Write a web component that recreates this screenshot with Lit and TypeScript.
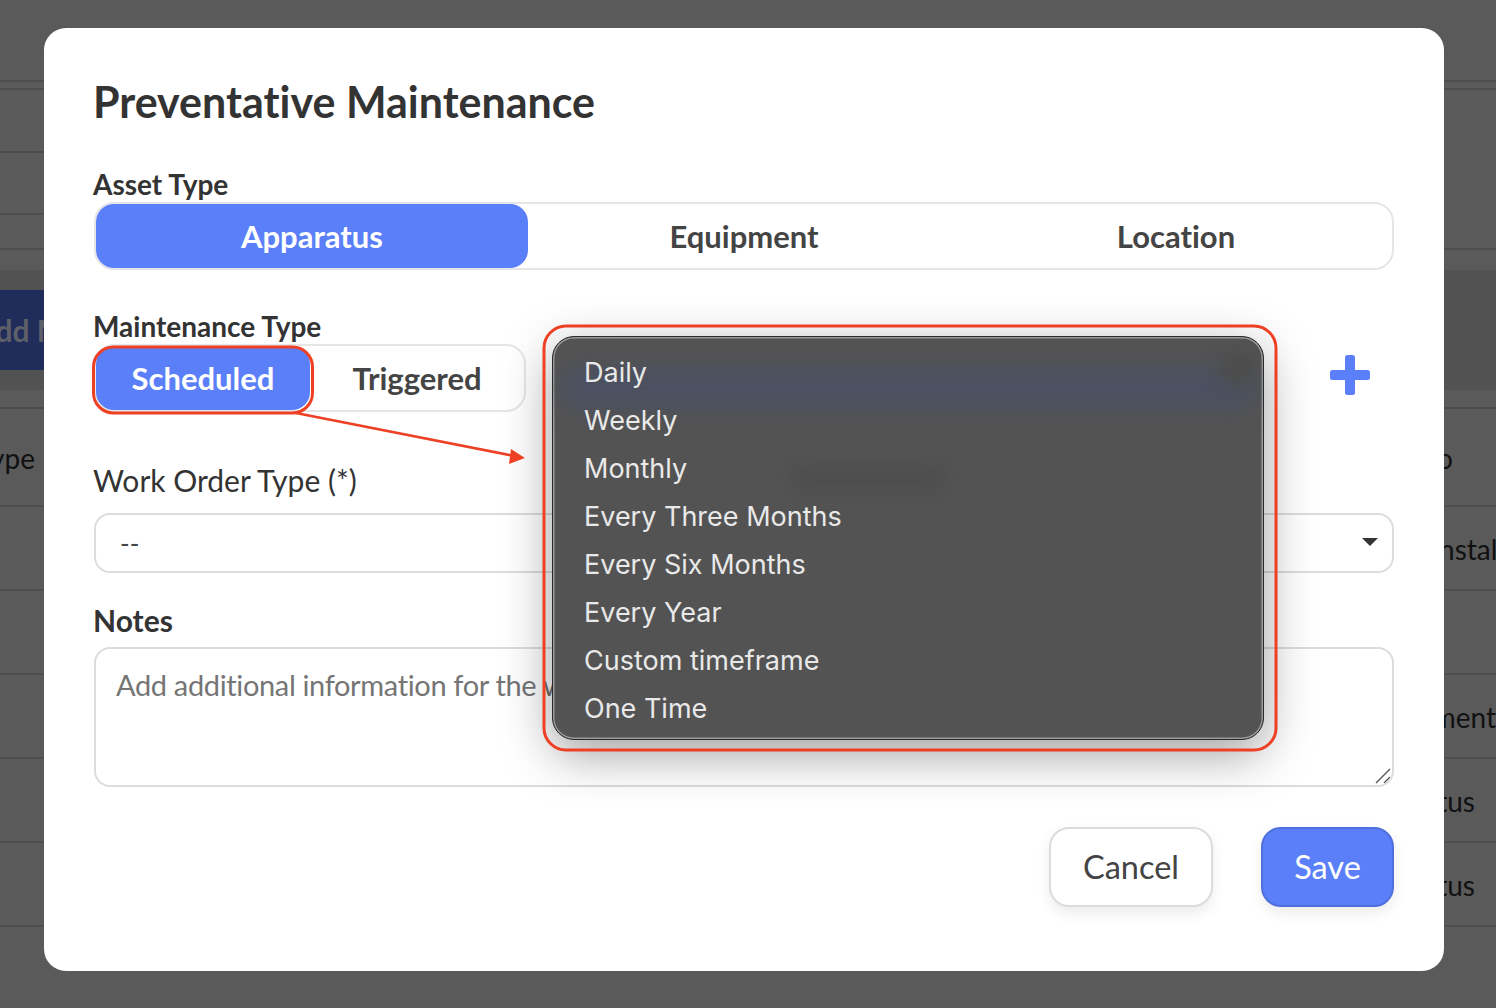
import { LitElement, html, css, svg } from "lit";
import { customElement } from "lit/decorators.js";

const MENU = ["Daily", "Weekly", "Monthly", "Every Three Months", "Every Six Months", "Every Year", "Custom timeframe", "One Time"];
// Page rows dimmed behind the dialog: [height, left text, right text, right offset]
const ROWS: [number, string, string, number][] = [
  [98, "Type", "Info", 43],
  [84, "", "Installation", -70],
  [84, "", "", 0],
  [84, "", "Equipment", 0],
  [84, "", "Status", 21],
  [84, "", "Status", 21],
];

@customElement("app-root")
export class AppRoot extends LitElement {
  static styles = css`
    :host { display: block; width: 1496px; height: 1008px; overflow: hidden; position: relative; font-family: Lato, sans-serif; color: #333; font-variant-ligatures: none; }
    * { box-sizing: border-box; }
    .page { width: 1496px; height: 1008px; background: #5a5a5a; display: flex; flex-direction: column; color: #111; font-size: 28px; overflow: hidden; }
    .ln { border-bottom: 2px solid #4d4d4f; flex: none; }
    .h82 { height: 82px; }
    .h8 { height: 8px; }
    .h162 { height: 160px; display: flex; flex-direction: column; border-bottom-color: #4d4d4f; }
    .partial { width: 44px; border-bottom: 2px solid #4d4d4f; flex: none; }
    .p1 { height: 63px; }
    .p2 { height: 62px; }
    .gap { height: 20px; flex: none; }
    .band { height: 120px; flex: none; background: #525252; display: flex; align-items: center; }
    .add { height: 80px; width: 260px; margin-left: -25px; flex: none; background: #202d5b; color: #5d6068; font-weight: 700; font-size: 30px; display: flex; align-items: center; white-space: nowrap; }
    .after { height: 19px; }
    .row { flex: none; display: flex; justify-content: space-between; align-items: center; white-space: nowrap; padding-top: 2px; }
    .row .l { margin-left: -24px; }

    .modal { position: absolute; left: 44px; top: 28px; width: 1400px; height: 943px; background: #fff; border-radius: 22px; padding: 50px; }
    h1 { margin: 0 0 0 -1px; font-size: 43px; line-height: 48px; font-weight: 700; color: #333; }
    .lab { font-size: 28px; line-height: 36px; font-weight: 700; color: #333; letter-spacing: 0; margin-left: -1px; }
    .lab.asset { margin-top: 40px; }
    .lab.maint { margin-top: 38px; }
    .lab.work { margin-top: 50px; font-weight: 400; font-size: 30px; }
    .lab.notes { margin-top: 29px; font-size: 30px; }
    .seg { display: flex; height: 68px; border: 2px solid #e6e6e6; border-radius: 20px; background: #fff; }
    .seg div { display: flex; align-items: center; justify-content: center; font-size: 31px; font-weight: 700; color: #444; }
    .seg .on { background: #5a7ff8; color: #fff; border-radius: 18px; }
    .seg3 div { flex: 1; }
    .mrow { display: flex; align-items: center; height: 68px; }
    .seg2 { width: 432px; flex: none; }
    .seg2 .on { width: 214px; flex: none; }
    .seg2 .off { flex: 1; }
    .plus { margin-left: 804px; width: 40px; height: 40px; flex: none; margin-top: -6px; }
    .select { margin-top: 15px; height: 60px; border: 2px solid #dcdcdc; border-radius: 16px; display: flex; align-items: center; justify-content: space-between; padding: 0 14px 0 24px; font-size: 26px; color: #444; }
    .caret { width: 0; height: 0; border-left: 8px solid transparent; border-right: 8px solid transparent; border-top: 8px solid #333; margin-bottom: 2px; }
    .area { position: relative; margin-top: 9px; height: 140px; border: 2px solid #dcdcdc; border-radius: 16px; padding: 18px 20px; font-size: 29px; line-height: 36px; color: #757575; letter-spacing: -0.35px; white-space: nowrap; overflow: hidden; }
    .grip { position: absolute; right: 1px; bottom: 1px; width: 16px; height: 16px; }
    .actions { margin-top: 40px; display: flex; justify-content: flex-end; gap: 48px; }
    .btn { height: 80px; border-radius: 20px; display: flex; align-items: center; justify-content: center; font-size: 32.5px; padding-bottom: 2px; box-shadow: 0 6px 14px rgba(0,0,0,.08); }
    .cancel { width: 164px; background: #fff; border: 2px solid #dcdcdc; color: #444; }
    .save { width: 133px; background: #5a7ff8; border: 2px solid #4f6fdc; color: #fff; }

    .menu { position: absolute; left: 508px; top: 308px; width: 712px; height: 404px; border-radius: 22px; background: #535353; overflow: hidden; border: 1px solid #2b2b2b; box-shadow: inset 0 0 0 1.5px #9a9a9a; font-family: Inter, sans-serif; font-size: 27px; color: #e9e9e9; padding: 12px 0 0 31px; }
    .menuwrap { position: absolute; left: 508px; top: 308px; width: 712px; height: 404px; border-radius: 22px; box-shadow: 0 14px 50px rgba(0,0,0,.38); }
    .streak { position: absolute; left: 8px; right: 8px; top: 30px; height: 42px; background: #4b5161; filter: blur(10px); border-radius: 18px; }
    .blob { position: absolute; right: 8px; top: 14px; width: 36px; height: 36px; border-radius: 50%; background: #4d4d4d; filter: blur(7px); }
    .smudge { position: absolute; left: 240px; top: 132px; width: 150px; height: 20px; background: #4c4c4c; filter: blur(9px); }
    .item { position: relative; height: 48px; line-height: 48px; white-space: nowrap; }
    .anno { position: absolute; left: 0; top: 0; width: 1496px; height: 1008px; pointer-events: none; }
  `;

  render() {
    return html`
      <div class="page">
        <div class="ln h82"></div>
        <div class="ln h8"></div>
        <div class="ln h162">
          <div class="partial p1"></div>
          <div class="partial p2"></div>
        </div>
        <div class="gap"></div>
        <div class="band"><div class="add">Add Maintenance</div></div>
        <div class="ln after"></div>
        ${ROWS.map(
          ([h, l, r, off]) => html`<div class="ln row" style="height:${h}px">
            <span class="l">${l}</span><span style="margin-right:${off}px">${r}</span>
          </div>`
        )}
      </div>

      <div class="modal">
        <h1>Preventative Maintenance</h1>
        <div class="lab asset">Asset Type</div>
        <div class="seg seg3">
          <div class="on">Apparatus</div>
          <div>Equipment</div>
          <div>Location</div>
        </div>
        <div class="lab maint">Maintenance Type</div>
        <div class="mrow">
          <div class="seg seg2">
            <div class="on">Scheduled</div>
            <div class="off">Triggered</div>
          </div>
          <svg class="plus" viewBox="0 0 40 40" fill="#5a7ff8">
            <rect x="15" y="0" width="10" height="40" rx="2.5"/>
            <rect x="0" y="15" width="40" height="10" rx="2.5"/>
          </svg>
        </div>
        <div class="lab work">Work Order Type (*)</div>
        <div class="select"><span>--</span><span class="caret"></span></div>
        <div class="lab notes">Notes</div>
        <div class="area">
          Add additional information for the work order
          <svg class="grip" viewBox="0 0 16 16"><path d="M1 15 15 1M9 15l6-6" stroke="#555" stroke-width="1.4" fill="none"/></svg>
        </div>
        <div class="actions">
          <div class="btn cancel">Cancel</div>
          <div class="btn save">Save</div>
        </div>
        <div class="menuwrap"></div>
        <div class="menu">
          <div class="streak"></div>
          <div class="blob"></div>
          <div class="smudge"></div>
          ${MENU.map((m) => html`<div class="item">${m}</div>`)}
        </div>
      </div>

      <svg class="anno" viewBox="0 0 1496 1008">
        ${svg`
          <rect x="93.5" y="347" width="219" height="66" rx="20" fill="none" stroke="#ee4024" stroke-width="3"/>
          <rect x="544" y="326" width="732" height="424" rx="22" fill="none" stroke="#ee4024" stroke-width="3"/>
          <path d="M296 413 512 455.5" stroke="#ee4024" stroke-width="2.5" fill="none"/>
          <path d="M525 458 509 464 511 449z" fill="#ee4024"/>
        `}
      </svg>
    `;
  }
}
